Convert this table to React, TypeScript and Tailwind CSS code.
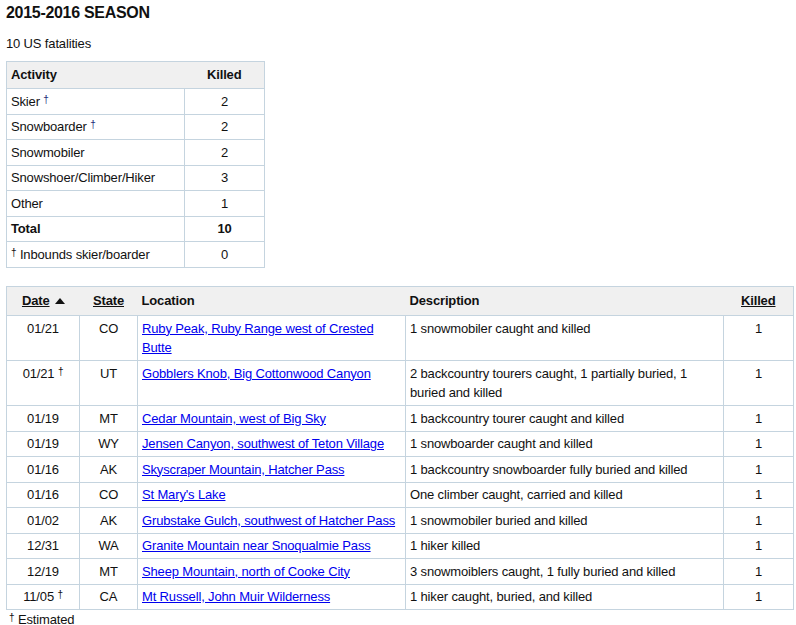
const activities = [
  { name: "Skier", dagger: true, killed: "2" },
  { name: "Snowboarder", dagger: true, killed: "2" },
  { name: "Snowmobiler", dagger: false, killed: "2" },
  { name: "Snowshoer/Climber/Hiker", dagger: false, killed: "3" },
  { name: "Other", dagger: false, killed: "1" },
];

const incidents = [
  { date: "01/21", est: false, state: "CO", loc: "Ruby Peak, Ruby Range west of Crested Butte", desc: "1 snowmobiler caught and killed" },
  { date: "01/21", est: true, state: "UT", loc: "Gobblers Knob, Big Cottonwood Canyon", desc: "2 backcountry tourers caught, 1 partially buried, 1 buried and killed" },
  { date: "01/19", est: false, state: "MT", loc: "Cedar Mountain, west of Big Sky", desc: "1 backcountry tourer caught and killed" },
  { date: "01/19", est: false, state: "WY", loc: "Jensen Canyon, southwest of Teton Village", desc: "1 snowboarder caught and killed" },
  { date: "01/16", est: false, state: "AK", loc: "Skyscraper Mountain, Hatcher Pass", desc: "1 backcountry snowboarder fully buried and killed" },
  { date: "01/16", est: false, state: "CO", loc: "St Mary's Lake", desc: "One climber caught, carried and killed" },
  { date: "01/02", est: false, state: "AK", loc: "Grubstake Gulch, southwest of Hatcher Pass", desc: "1 snowmobiler buried and killed" },
  { date: "12/31", est: false, state: "WA", loc: "Granite Mountain near Snoqualmie Pass", desc: "1 hiker killed" },
  { date: "12/19", est: false, state: "MT", loc: "Sheep Mountain, north of Cooke City", desc: "3 snowmoiblers caught, 1 fully buried and killed" },
  { date: "11/05", est: true, state: "CA", loc: "Mt Russell, John Muir Wilderness", desc: "1 hiker caught, buried, and killed" },
];

function Dagger({ className = "" }: { className?: string }) {
  return <sup className={"text-[10px] relative -top-[3px] " + className}>†</sup>;
}

const td = "border border-[#c5d4df] px-[4px] py-[2.5px] align-top";
const th = "border-b border-[#c5d4df] px-[4px] font-bold";

export default function App() {
  return (
    <div className="px-[6px] text-[13px] leading-[19.5px] tracking-[-0.15px] text-[#111]" style={{ fontFamily: '"Liberation Sans", Arial, sans-serif' }}>
      <h2 className="mt-[3px] text-[16px] leading-[20px] font-bold tracking-[-0.3px]">2015-2016 SEASON</h2>
      <p className="mt-[11px]">10 US fatalities</p>

      {/* Summary */}
      <table className="mt-[7px] w-[258px] table-fixed border-collapse border border-[#c5d4df]">
        <colgroup>
          <col className="w-[178px]" />
          <col className="w-[80px]" />
        </colgroup>
        <thead>
          <tr className="bg-[#f0f0f0]">
            <th className={th + " py-[3.5px] text-left"}>Activity</th>
            <th className={th + " py-[3.5px] text-center"}>Killed</th>
          </tr>
        </thead>
        <tbody>
          {activities.map((a) => (
            <tr key={a.name}>
              <td className={td}>
                {a.name}
                {a.dagger && <> <Dagger className="text-[#1c2a78]" /></>}
              </td>
              <td className={td + " text-center"}>{a.killed}</td>
            </tr>
          ))}
          <tr className="font-bold">
            <td className={td}>Total</td>
            <td className={td + " text-center"}>10</td>
          </tr>
          <tr>
            <td className={td}>
              <Dagger /> Inbounds skier/boarder
            </td>
            <td className={td + " text-center"}>0</td>
          </tr>
        </tbody>
      </table>

      {/* Incidents */}
      <table className="mt-[18px] w-[787px] table-fixed border-collapse border border-[#c5d4df]">
        <colgroup>
          <col className="w-[73px]" />
          <col className="w-[58px]" />
          <col className="w-[268px]" />
          <col className="w-[318px]" />
          <col className="w-[70px]" />
        </colgroup>
        <thead>
          <tr className="bg-[#f0f0f0]">
            <th className={th + " py-[4.5px] text-center"}>
              <span className="underline">Date</span>
              <svg className="ml-[5px] inline-block align-[1px]" width="10" height="6" viewBox="0 0 10 6">
                <path d="M0 6 L5 0 L10 6 Z" fill="#111" />
              </svg>
            </th>
            <th className={th + " py-[4.5px] text-center"}>
              <span className="underline">State</span>
            </th>
            <th className={th + " py-[4.5px] text-left"}>Location</th>
            <th className={th + " py-[4.5px] text-left"}>Description</th>
            <th className={th + " py-[4.5px] text-center"}>
              <span className="underline">Killed</span>
            </th>
          </tr>
        </thead>
        <tbody>
          {incidents.map((r, i) => (
            <tr key={i}>
              <td className={td + " text-center"}>
                {r.date}
                {r.est && <> <Dagger /></>}
              </td>
              <td className={td + " text-center"}>{r.state}</td>
              <td className={td}>
                <a href="#" className="text-[#0000ee] underline">{r.loc}</a>
              </td>
              <td className={td}>{r.desc}</td>
              <td className={td + " text-center"}>1</td>
            </tr>
          ))}
        </tbody>
      </table>
      <p className="pl-[3px]">
        <Dagger /> Estimated
      </p>
    </div>
  );
}
